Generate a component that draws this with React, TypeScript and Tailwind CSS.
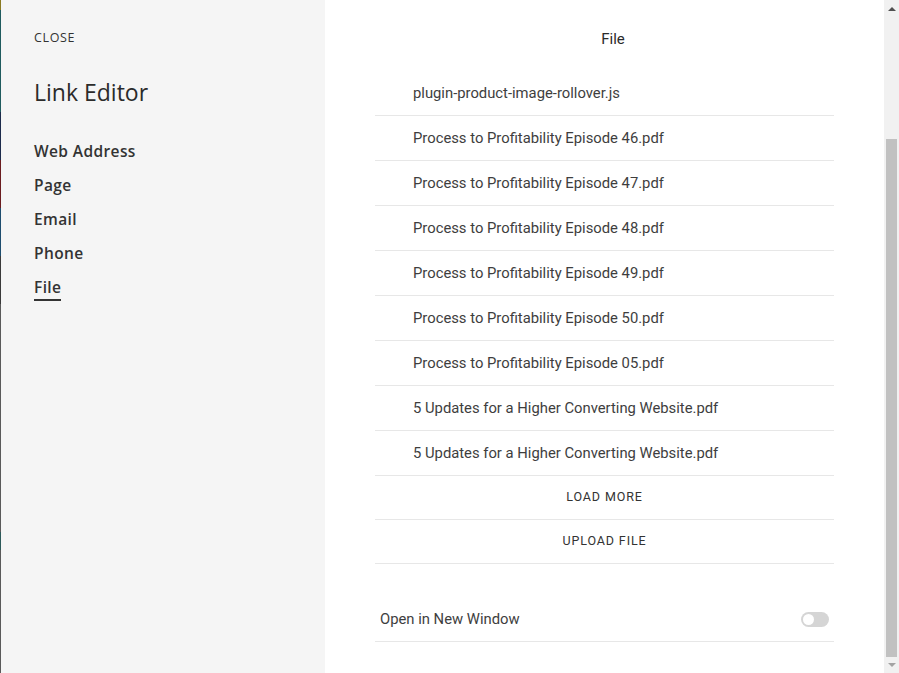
import { useState } from 'react';

const files = [
  'plugin-product-image-rollover.js',
  'Process to Profitability Episode 46.pdf',
  'Process to Profitability Episode 47.pdf',
  'Process to Profitability Episode 48.pdf',
  'Process to Profitability Episode 49.pdf',
  'Process to Profitability Episode 50.pdf',
  'Process to Profitability Episode 05.pdf',
  '5 Updates for a Higher Converting Website.pdf',
  '5 Updates for a Higher Converting Website.pdf',
];

const navItems = ['Web Address', 'Page', 'Email', 'Phone', 'File'];

function EdgeStrip() {
  return (
    <div className="flex w-px flex-col">
      <div className="h-[10px] bg-[#8a7a22]" />
      <div className="h-[102px] bg-[#1f5b5e]" />
      <div className="h-[48px] bg-[#1c2b4b]" />
      <div className="h-[48px] bg-[#6b1c1f]" />
      <div className="h-[48px] bg-[#1d4d6e]" />
      <div className="h-[48px] bg-[#3a3a3a]" />
      <div className="h-[228px] bg-[#5a5a5a]" />
      <div className="h-[18px] bg-[#2d5a5a]" />
      <div className="flex-1 bg-[#5a5a5a]" />
    </div>
  );
}

function Scrollbar() {
  return (
    <div className="flex w-[15px] flex-col bg-[#f1f1f1]">
      <div className="flex h-[17px] items-center justify-center">
        <div className="h-0 w-0 border-x-[4px] border-b-[4px] border-x-transparent border-b-[#505050]" />
      </div>
      <div className="h-[122px]" />
      <div className="mx-[2px] h-[518px] bg-[#c1c1c1]" />
      <div className="flex flex-1 items-center justify-center">
        <div className="h-0 w-0 border-x-[4px] border-t-[4px] border-x-transparent border-t-[#a3a3a3]" />
      </div>
    </div>
  );
}

export default function App() {
  const [active, setActive] = useState('File');
  const [newWindow, setNewWindow] = useState(false);

  return (
    <div
      className="flex h-[673px] w-[899px] overflow-hidden bg-white text-[#333]"
      style={{ fontFamily: 'Roboto, "Liberation Sans", sans-serif' }}
    >
      <EdgeStrip />
      <aside
        className="flex w-[324px] flex-col bg-[#f5f5f5] pl-[33px] pt-[31px]"
        style={{ fontFamily: '"Open Sans", "Liberation Sans", sans-serif' }}
      >
        <button className="self-start text-[12.5px] uppercase leading-[14px] tracking-[0.05em] text-[#333]">
          Close
        </button>
        <h1 className="mt-[33px] text-[23px] leading-[28px] text-[#2b2b2b]">Link Editor</h1>
        <nav className="mt-[35px] flex flex-col gap-[10px]">
          {navItems.map((item) => (
            <button
              key={item}
              onClick={() => setActive(item)}
              className="self-start text-left text-[15.5px] font-semibold leading-[20px] tracking-[0.025em] text-[#333]"
            >
              <span
                className={
                  active === item ? 'inline-block border-b-2 border-[#333] pb-[2px]' : 'inline-block pb-[4px]'
                }
              >
                {item}
              </span>
            </button>
          ))}
        </nav>
      </aside>

      <main className="flex flex-1 justify-center">
        <div className="flex w-[459px] flex-col">
          <div className="pl-[17px] pt-[30px] text-center text-[15px] leading-[18px] text-[#2a2a2a]">File</div>
          <ul className="mt-[23px]">
            {files.map((name, i) => (
              <li
                key={i}
                className="flex h-[45px] items-center border-b border-[#e7e7e7] pl-[38px] text-[14.8px] text-[#3e3e3e]"
              >
                {name}
              </li>
            ))}
          </ul>
          <button className="flex h-[44px] items-center justify-center border-b border-[#e7e7e7] text-[12.5px] font-normal uppercase tracking-[0.07em] text-[#333]">
            Load More
          </button>
          <button className="flex h-[44px] items-center justify-center border-b border-[#e7e7e7] text-[12.5px] font-normal uppercase tracking-[0.07em] text-[#333]">
            Upload File
          </button>
          <div className="mt-[33px] flex h-[45px] items-center justify-between border-b border-[#e7e7e7] px-[5px]">
            <span className="text-[14.8px] text-[#3e3e3e]">Open in New Window</span>
            <button
              onClick={() => setNewWindow(!newWindow)}
              className={`flex h-[15px] w-[28px] items-center rounded-full px-[2px] ${
                newWindow ? 'justify-end bg-[#333]' : 'justify-start bg-[#d5d5d5]'
              }`}
            >
              <span className="h-[11px] w-[11px] rounded-full bg-white" />
            </button>
          </div>
        </div>
      </main>

      <Scrollbar />
    </div>
  );
}
